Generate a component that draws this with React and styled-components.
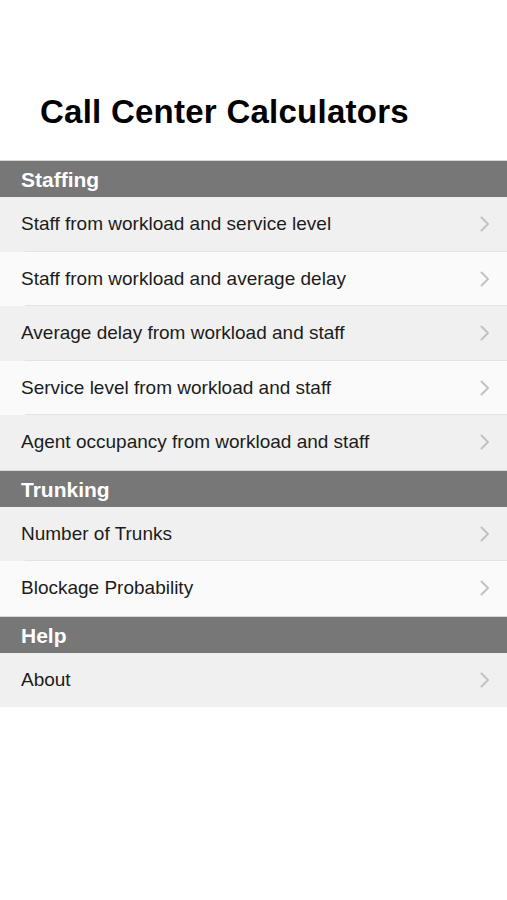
import React from "react";
import styled, { createGlobalStyle } from "styled-components";

const GlobalStyle = createGlobalStyle`
  html, body {
    margin: 0;
    padding: 0;
    background: #ffffff;
  }
  body {
    font-family: "Liberation Sans", Arial, Helvetica, sans-serif;
    -webkit-font-smoothing: antialiased;
  }
`;

const Screen = styled.div`
  width: 507px;
  min-height: 900px;
  background: #ffffff;
  display: flex;
  flex-direction: column;
`;

const TitleBar = styled.header`
  padding: 92px 0 28px 40px;
`;

const Title = styled.h1`
  margin: 0;
  font-size: 33px;
  line-height: 40px;
  font-weight: 700;
  color: #000000;
  letter-spacing: 0.25px;
`;

const List = styled.div`
  display: flex;
  flex-direction: column;
`;

const SectionHeader = styled.div`
  height: 37px;
  box-sizing: border-box;
  padding: 2px 0 0 21px;
  display: flex;
  align-items: center;
  background: #777777;
  border-top: 1px solid #d8d8d8;
  color: #ffffff;
  font-size: 21px;
  font-weight: 700;
`;

const Row = styled.div`
  height: 54.5px;
  box-sizing: border-box;
  padding: 0 17px 0 21px;
  display: flex;
  align-items: center;
  justify-content: space-between;
  background:
    ${(p) => (p.$last ? "" : "linear-gradient(#e3e3e3, #e3e3e3) no-repeat 25px 100% / calc(100% - 25px) 1px,")}
    ${(p) => (p.$alt ? "#fafafa" : "#f0f0f0")};
  color: #1c1c1c;
  font-size: 19px;
  cursor: pointer;
`;

const Label = styled.span`
  line-height: 22px;
`;

const Chevron = styled.svg`
  width: 10px;
  height: 16px;
  flex: none;
`;

const ChevronIcon = () => (
  <Chevron viewBox="0 0 10 16">
    <polyline
      points="1.5,1.5 8,8 1.5,14.5"
      fill="none"
      stroke="#c2c2c2"
      strokeWidth="2"
      strokeLinecap="round"
      strokeLinejoin="round"
    />
  </Chevron>
);

const sections = [
  {
    title: "Staffing",
    items: [
      "Staff from workload and service level",
      "Staff from workload and average delay",
      "Average delay from workload and staff",
      "Service level from workload and staff",
      "Agent occupancy from workload and staff",
    ],
  },
  {
    title: "Trunking",
    items: ["Number of Trunks", "Blockage Probability"],
  },
  {
    title: "Help",
    items: ["About"],
  },
];

export default function App() {
  return (
    <>
      <GlobalStyle />
      <Screen>
        <TitleBar>
          <Title>Call Center Calculators</Title>
        </TitleBar>
        <List>
          {sections.map((s) => (
            <React.Fragment key={s.title}>
              <SectionHeader>{s.title}</SectionHeader>
              {s.items.map((item, i) => (
                <Row key={item} $alt={i % 2 === 1} $last={i === s.items.length - 1}>
                  <Label>{item}</Label>
                  <ChevronIcon />
                </Row>
              ))}
            </React.Fragment>
          ))}
        </List>
      </Screen>
    </>
  );
}
